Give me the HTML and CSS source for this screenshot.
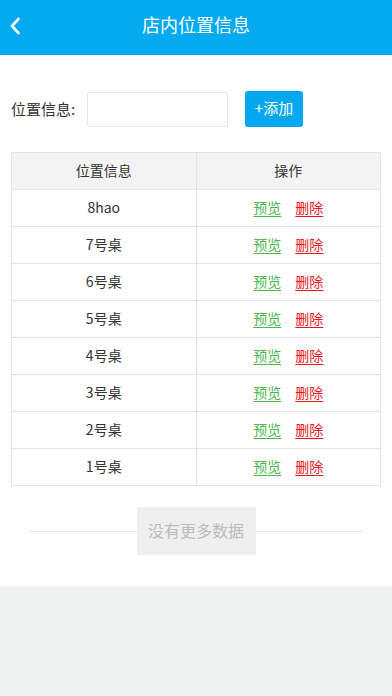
FILE: index.html
```html
<!DOCTYPE html>
<html lang="zh-CN">
<head>
    <meta charset="UTF-8">
    <meta name="viewport" content="width=device-width, initial-scale=1.0">
    <title>店内位置信息</title>
    <link rel="stylesheet" href="styles.css">
</head>
<body>
    <!-- 顶部导航 -->
    <div class="header">
        <a class="back" href="#">
            <svg width="12" height="18" viewBox="0 0 12 18"><path d="M9.5 2 L3 9 L9.5 16" fill="none" stroke="#fff" stroke-width="2.6" stroke-linecap="round" stroke-linejoin="round"/></svg>
        </a>
        <span class="title">店内位置信息</span>
    </div>

    <div class="main">
        <!-- 添加位置 -->
        <div class="add-row">
            <label for="pos">位置信息:</label>
            <input type="text" id="pos">
            <button>+添加</button>
        </div>

        <!-- 位置列表 -->
        <table class="pos-table">
            <thead>
                <tr><th>位置信息</th><th>操作</th></tr>
            </thead>
            <tbody>
                <tr><td>8hao</td><td><a class="view" href="#">预览</a><a class="del" href="#">删除</a></td></tr>
                <tr><td>7号桌</td><td><a class="view" href="#">预览</a><a class="del" href="#">删除</a></td></tr>
                <tr><td>6号桌</td><td><a class="view" href="#">预览</a><a class="del" href="#">删除</a></td></tr>
                <tr><td>5号桌</td><td><a class="view" href="#">预览</a><a class="del" href="#">删除</a></td></tr>
                <tr><td>4号桌</td><td><a class="view" href="#">预览</a><a class="del" href="#">删除</a></td></tr>
                <tr><td>3号桌</td><td><a class="view" href="#">预览</a><a class="del" href="#">删除</a></td></tr>
                <tr><td>2号桌</td><td><a class="view" href="#">预览</a><a class="del" href="#">删除</a></td></tr>
                <tr><td>1号桌</td><td><a class="view" href="#">预览</a><a class="del" href="#">删除</a></td></tr>
            </tbody>
        </table>

        <!-- 没有更多 -->
        <div class="no-more">
            <span>没有更多数据</span>
        </div>
    </div>

    <div class="footer"></div>
</body>
</html>
```

FILE: styles.css
```css
/* 基础 */
body {
    margin: 0;
    font-family: "Noto Sans CJK SC", "Noto Sans", sans-serif;
    color: #333;
    background-color: #fff;
    width: 392px;
    height: 696px;
    display: flex;
    flex-direction: column;
}

/* 顶部导航 */
.header {
    height: 55px;
    background-color: #03aaf2;
    display: flex;
    align-items: center;
    justify-content: center;
    position: relative;
}

.header .back {
    position: absolute;
    left: 9px;
    top: 17px;
    display: flex;
}

.header .title {
    color: #fff;
    font-size: 18px;
    margin-top: -7px;
}

.main {
    padding: 0 11px;
    height: 531px;
    box-sizing: border-box;
}

/* 添加行 */
.add-row {
    display: flex;
    align-items: center;
    margin-top: 36px;
    height: 36px;
}

.add-row label {
    font-size: 15px;
    color: #333;
    width: 76px;
    margin-top: -2px;
}

.add-row input {
    width: 141px;
    height: 35px;
    box-sizing: border-box;
    border: 1px solid #e6e6e6;
    border-radius: 2px;
    margin: 0;
    padding: 0 6px;
    outline: none;
}

.add-row button {
    margin-left: 17px;
    width: 58px;
    height: 36px;
    border: none;
    border-radius: 3px;
    background-color: #05a7ee;
    color: #fff;
    font-family: inherit;
    font-size: 15px;
    padding: 0 0 3px;
    margin-top: -1px;
}

/* 表格 */
.pos-table {
    width: 370px;
    border-collapse: collapse;
    margin-top: 25px;
}

.pos-table th,
.pos-table td {
    border: 1px solid #e3e3e3;
    height: 33px;
    padding: 0 0 3px;
    text-align: center;
    font-size: 14px;
    font-weight: normal;
    width: 50%;
}

.pos-table th {
    background-color: #f3f3f3;
}

.pos-table td a {
    font-size: 14px;
    text-decoration: underline;
    text-underline-offset: 3px;
}

.pos-table .view {
    color: #4cb84c;
    margin-right: 14px;
}

.pos-table .del {
    color: #e8171b;
}

/* 没有更多数据 */
.no-more {
    margin: 21px 18px 0;
    height: 48px;
    display: flex;
    align-items: center;
    justify-content: center;
    background: linear-gradient(#e4e4e4, #e4e4e4) no-repeat center / 100% 1px;
}

.no-more span {
    background-color: #efefef;
    color: #bbb;
    font-size: 16px;
    width: 119px;
    height: 48px;
    padding-bottom: 3px;
    box-sizing: border-box;
    display: flex;
    align-items: center;
    justify-content: center;
}

.footer {
    flex: 1;
    background-color: #f0f1f1;
}
```
